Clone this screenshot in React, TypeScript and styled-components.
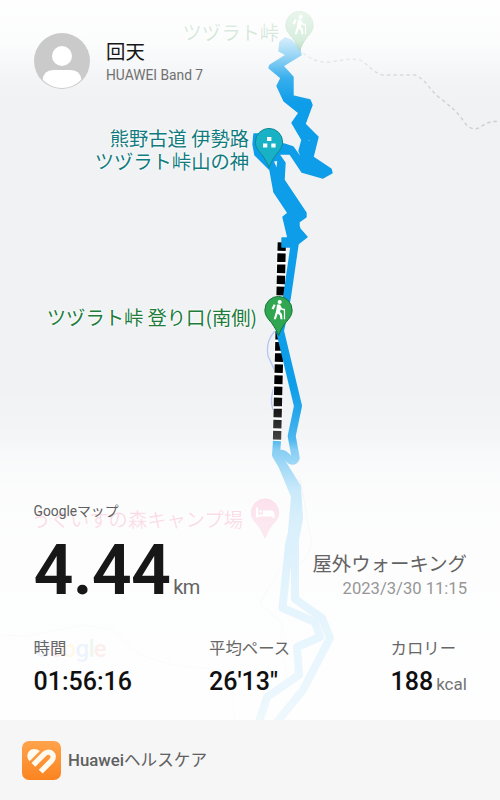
import React from "react";
import styled, { createGlobalStyle } from "styled-components";

const stats = [
  { label: "時間", value: "01:56:16", unit: "" },
  { label: "平均ペース", value: "26'13\"", unit: "" },
  { label: "カロリー", value: "188", unit: "kcal" }
];

const Hiker: React.FC = () => (
  <g fill="#fff">
    <circle cx="1.2" cy="-8" r="2.1" />
    <path d="M-1.5 -5.6L1.5 -5.4L3.4 -1.8L6.6 -1V9.2H5.4V0.4L2.2 -0.4L1.5 1.8L3.5 4.2L4 9.2H2L1.4 5.4L-0.7 3.4L-2.6 9.2H-4.8L-2.4 1Z" />
    <path d="M-4.8 -5.8L-2.8 -5L-4.8 -0.4L-7 -1.2Z" />
  </g>
);

const PinShape: React.FC<{ fill: string; stroke: string }> = props => (
  <path
    d="M0 25.5C-1.8 21 -3.6 17.4 -7 12.8C-10.8 8.4 -13.6 5.4 -13.6 0A13.6 13.6 0 0 1 13.6 0C13.6 5.4 10.8 8.4 7 12.8C3.6 17.4 1.8 21 0 25.5Z"
    {...props}
  />
);

const RouteMap: React.FC = () => (
  <MapDrawing viewBox="0 0 500 720">
    {/* Trails and streams */}
    <g fill="none">
      <path
        d="M303 53C312 60 320 63 330 62C344 60 352 58 360 60C370 66 375 74 383 75H415C427 80 430 91 440 98C450 106 458 112 464 122C471 131 477 130 482 126Q490 120 500 122"
        stroke="#cfcfcf"
        strokeWidth="1.4"
        strokeDasharray="3.5 3"
      />
      <path
        d="M275 331C266 341 267 350 268 356L275 371V385Q269 399 273 410"
        stroke="#b4c6f3"
        strokeWidth="1.3"
      />
      <path
        d="M300 480C306 505 308 530 312 542L307 557L300 565M282 565L260 603L282 624V650L288 685M0 635L28 636L83 625L114 630L135 651Q160 667 220 669L232 696L235 720"
        stroke="#d3d5de"
        strokeWidth="1.2"
      />
    </g>

    {/* Paused section */}
    <path d="M281.8 242L277 441" stroke="#fff" strokeWidth="9.5" />
    <path
      d="M281.8 242.3L277 441"
      stroke="#000"
      strokeWidth="8.3"
      strokeDasharray="8.6 2.5"
    />

    {/* Recorded track */}
    <g fill="#0d9de9" stroke="#0d9de9" strokeWidth="1.4" strokeLinejoin="round">
      <path d="M280 42L285 38L291 40L300 49L301 55L283 66L293 77V96L310 100L312 105L305 124L318 137L313 157L331 169L332 173L323 178L302 172L290 154H278L276 144H284L293 147L303 161L299 151L302 140L292 123L299 113L284 101L277 86L281 78L269 68L270 65L286 55L279 51Z" />
      <path
        fillRule="evenodd"
        d="M254 134H259L278 153L285 163L284 180L306 213V217L299 222V226L300 229L307 237L298 244L290 247H282V238H288L283 217L288 213L274 192L270 170L255 155L253 144ZM273 161L277 170L278 160Z"
      />
    </g>
    <g fill="none" stroke="#0d9de9" strokeWidth="8" strokeLinejoin="round">
      <path d="M295 242L287 297L280 331L298 406L291.7 436L295.7 458Q293 464 287 457Q282 452 277 455" />
      <path d="M259 722L267 697L299 675L297 647L320 637L315 622L282.5 608L289 545L295 520V487L276 455L277 441" />
      <path d="M277 722L303 690L330 638L322 618L295 599V540L299 518L297 487L277 455" />
    </g>
    <path
      d="M277 451L297 483L303 517L298 540V553H289L288 530L291 497L277 463Z"
      fill="#0d9de9"
    />
    <path d="M309 140V141" stroke="#80c9f0" />

    <g transform="translate(299.5 25)">
      <PinShape fill="#34a853" stroke="#168044" />
      <Hiker />
    </g>
    <g transform="translate(269 142)">
      <PinShape fill="#19b1c6" stroke="#0b8996" />
      <path
        fill="#fff"
        d="M-2 -5H2.4V-1H-2ZM-6 1.5H-1.7V5.6H-6ZM2.3 1.5H6.6V5.6H2.3Z"
      />
    </g>
    <g transform="translate(278.5 310)">
      <PinShape fill="#31a650" stroke="#13733a" />
      <Hiker />
    </g>
    <g transform="translate(265 512.5)">
      <PinShape fill="#ed6ca0" stroke="#e86094" />
      <path
        d="M-8 -5V5M-8 3H8.5V5.5M-2 0H8V3M-4.5 -2.5V0"
        fill="none"
        stroke="#fff"
        strokeWidth="2.2"
      />
      <path fill="#fff" d="M-2 -2H6Q8.5 -2 8.5 1V3H-2Z" />
    </g>
  </MapDrawing>
);

const HealthLogo: React.FC = () => (
  <svg width="39" height="39" viewBox="0 0 39 39">
    <defs>
      <linearGradient id="logo" x1="0" y1="0" x2="0" y2="1">
        <stop offset="0" stopColor="#ffa34c" />
        <stop offset="1" stopColor="#fa8420" />
      </linearGradient>
    </defs>
    <rect width="39" height="39" rx="7" fill="url(#logo)" />
    <path
      d="M5.3 15.6C5.3 11 8.3 8 12.1 8C14.3 8 16.3 8.7 17.8 10L7.6 20.2Q5.4 18.2 5.3 15.6Z"
      fill="#fffaf0"
    />
    <path
      d="M11.4 23.8L22.1 13.1C27.7 8 34.6 14.4 29.4 19.9L18.7 30.6"
      fill="none"
      stroke="#fffaf0"
      strokeWidth="5.4"
    />
  </svg>
);

const App: React.FC = () => {
  return (
    <Poster>
      <GlobalStyle />
      <MapLayer>
        <RouteMap />
        <MapLabel $top={21} $right={221} $color="#188038">
          ツヅラト峠
        </MapLabel>
        <MapLabel $top={127} $right={251} $color="#127b80">
          熊野古道 伊勢路
          <br />
          ツヅラト峠山の神
        </MapLabel>
        <MapLabel $top={306} $right={243} $color="#207b3b">
          ツヅラト峠 登り口(南側)
        </MapLabel>
        <MapLabel $top={508} $right={257} $color="#e0356f">
          うぐいすの森キャンプ場
        </MapLabel>
        <GoogleMark>
          <Letter $color="#4285f4">G</Letter>
          <Letter $color="#ea4335">o</Letter>
          <Letter $color="#fbbc05">o</Letter>
          <Letter $color="#4285f4">g</Letter>
          <Letter $color="#34a853">l</Letter>
          <Letter $color="#ea4335">e</Letter>
        </GoogleMark>
        <Veil />
      </MapLayer>

      <Content>
        <Profile>
          <Avatar viewBox="0 0 56 56">
            <clipPath id="face">
              <circle cx="28" cy="28" r="27" />
            </clipPath>
            <circle cx="28" cy="28" r="28" fill="#cacaca" />
            <g fill="#fff" clipPath="url(#face)">
              <circle cx="28" cy="23" r="10" />
              <path d="M8.5 56V47Q10 37 19 37H37Q46 37 47.5 47V56Z" />
            </g>
          </Avatar>
          <div>
            <UserName>回天</UserName>
            <Device>HUAWEI Band 7</Device>
          </div>
        </Profile>

        <Source>Googleマップ</Source>
        <Summary>
          <Distance>
            4.44<DistanceUnit>km</DistanceUnit>
          </Distance>
          <Activity>
            <ActivityName>屋外ウォーキング</ActivityName>
            <ActivityDate>2023/3/30 11:15</ActivityDate>
          </Activity>
        </Summary>
        <Stats>
          {stats.map(stat => (
            <div key={stat.label}>
              <StatLabel>{stat.label}</StatLabel>
              <StatValue>
                {stat.value}
                {stat.unit && <StatUnit>{stat.unit}</StatUnit>}
              </StatValue>
            </div>
          ))}
        </Stats>
      </Content>

      <Footer>
        <HealthLogo />
        <Brand>
          Huawei<BrandSuffix>ヘルスケア</BrandSuffix>
        </Brand>
      </Footer>
    </Poster>
  );
};

const GlobalStyle = createGlobalStyle`
  body {
    margin: 0;
    font-family: Roboto, "Noto Sans CJK JP", sans-serif;
  }
`;

const Poster = styled.main`
  position: relative;
  display: flex;
  flex-direction: column;
  width: 500px;
  height: 800px;
  overflow: hidden;
  background: #fff;
`;

const MapLayer = styled.div`
  position: absolute;
  top: 0;
  left: 0;
  width: 500px;
  height: 720px;
  background: #f0f2f4;
`;

const MapDrawing = styled.svg`
  display: block;
  width: 500px;
  height: 720px;
`;

const MapLabel = styled.div<{ $top: number; $right: number; $color: string }>`
  position: absolute;
  top: ${props => props.$top}px;
  right: ${props => props.$right}px;
  color: ${props => props.$color};
  font-family: "Noto Sans CJK JP", sans-serif;
  font-size: 19.3px;
  line-height: 23px;
  text-align: right;
  white-space: nowrap;
  text-shadow: 0 0 2px #fff, 0 0 2px #fff, 0 0 3px #fff;
`;

const GoogleMark = styled.div`
  position: absolute;
  top: 635px;
  left: 34px;
  font-size: 24px;
  line-height: 28px;
  letter-spacing: -0.7px;
  font-weight: 500;
`;

const Letter = styled.span<{ $color: string }>`
  color: ${props => props.$color};
`;

const Veil = styled.div`
  position: absolute;
  inset: 0;
  background: linear-gradient(
    rgba(255, 255, 255, 0.93) 0,
    rgba(255, 255, 255, 0.8) 40px,
    rgba(255, 255, 255, 0.54) 58px,
    rgba(255, 255, 255, 0.18) 78px,
    rgba(255, 255, 255, 0) 103px,
    rgba(255, 255, 255, 0) 385px,
    rgba(255, 255, 255, 0.1) 412px,
    rgba(255, 255, 255, 0.27) 440px,
    rgba(255, 255, 255, 0.5) 450px,
    rgba(255, 255, 255, 0.78) 490px,
    rgba(255, 255, 255, 0.84) 520px,
    rgba(255, 255, 255, 0.89) 600px,
    rgba(255, 255, 255, 0.93) 720px
  );
`;

const Content = styled.section`
  position: relative;
  box-sizing: border-box;
  height: 720px;
  padding: 33px 33px 0 33.5px;
`;

const Profile = styled.header`
  display: flex;
  gap: 16.5px;
  height: 469px;
`;

const Avatar = styled.svg`
  width: 56px;
  height: 56px;
`;

const UserName = styled.div`
  margin-top: 8px;
  color: #171717;
  font-size: 19.4px;
  line-height: 24px;
`;

const Device = styled.div`
  margin-top: 2px;
  color: #707070;
  font-size: 13.8px;
  line-height: 16px;
`;

const Source = styled.div`
  color: #5f5f5f;
  font-size: 13.8px;
  line-height: 18px;
`;

const Summary = styled.div`
  display: flex;
  justify-content: space-between;
  height: 119px;
`;

const Distance = styled.div`
  margin-top: 9px;
  color: #171717;
  font-size: 70px;
  line-height: 82px;
  letter-spacing: -0.8px;
  font-weight: 600;
  white-space: nowrap;
`;

const DistanceUnit = styled.span`
  margin-left: 3px;
  color: #636363;
  font-size: 20px;
  letter-spacing: -0.5px;
  font-weight: 400;
`;

const Activity = styled.div`
  padding-top: 32px;
  text-align: right;
`;

const ActivityName = styled.div`
  color: #636363;
  font-size: 19.4px;
  line-height: 26px;
`;

const ActivityDate = styled.div`
  margin-top: 1px;
  color: #969696;
  font-size: 16.6px;
  line-height: 20px;
`;

const Stats = styled.div`
  display: grid;
  grid-template-columns: 175.5px 181.5px 1fr;
  margin-top: -1px;
  white-space: nowrap;
`;

const StatLabel = styled.div`
  color: #676767;
  font-size: 16.4px;
  line-height: 22px;
`;

const StatValue = styled.div`
  margin-top: 8px;
  color: #101010;
  font-size: 25px;
  line-height: 28px;
  font-weight: 500;
`;

const StatUnit = styled.span`
  margin-left: 3px;
  color: #737373;
  font-size: 17px;
  font-weight: 400;
`;

const Footer = styled.footer`
  position: relative;
  box-sizing: border-box;
  display: flex;
  align-items: center;
  gap: 7px;
  height: 80px;
  padding-left: 22px;
  background: #f6f6f6;
`;

const Brand = styled.span`
  margin-bottom: 3px;
  color: #606060;
  font-size: 16.8px;
  font-weight: 500;
`;

const BrandSuffix = styled.span`
  font-size: 16.6px;
  font-weight: 400;
`;

export default App;
